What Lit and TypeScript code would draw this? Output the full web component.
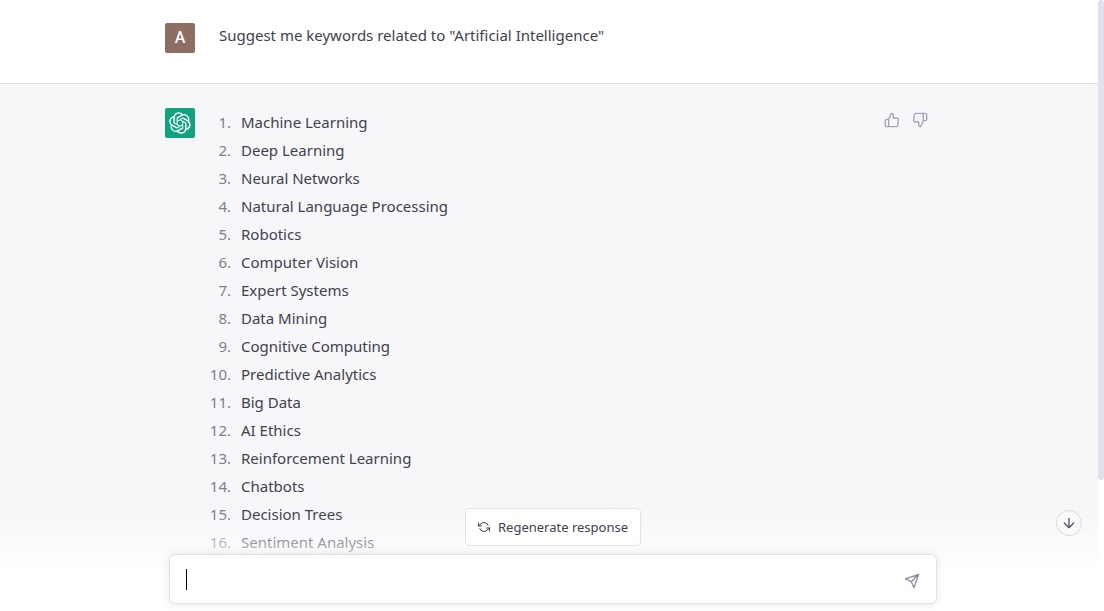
import { LitElement, html, css, svg } from "lit";
import { customElement, property } from "lit/decorators.js";

const KEYWORDS = [
  "Machine Learning",
  "Deep Learning",
  "Neural Networks",
  "Natural Language Processing",
  "Robotics",
  "Computer Vision",
  "Expert Systems",
  "Data Mining",
  "Cognitive Computing",
  "Predictive Analytics",
  "Big Data",
  "AI Ethics",
  "Reinforcement Learning",
  "Chatbots",
  "Decision Trees",
  "Sentiment Analysis",
];

const GLYPHS: Record<string, unknown> = {
  up: svg`<path d="M14 9V5a3 3 0 0 0-3-3l-4 9v11h11.28a2 2 0 0 0 2-1.7l1.38-9a2 2 0 0 0-2-2.3zM7 22H4a2 2 0 0 1-2-2v-7a2 2 0 0 1 2-2h3"/>`,
  down: svg`<path d="M10 15v4a3 3 0 0 0 3 3l4-9V2H5.72a2 2 0 0 0-2 1.7l-1.38 9a2 2 0 0 0 2 2.3zm7-13h2.67A2.31 2.31 0 0 1 22 4v7a2.31 2.31 0 0 1-2.33 2H17"/>`,
  refresh: svg`<path d="M1 4v6h6M23 20v-6h-6"/><path d="M20.49 9A9 9 0 0 0 5.64 5.64L1 10m22 4l-4.64 4.36A9 9 0 0 1 3.51 15"/>`,
  send: svg`<path d="M22 2L11 13M22 2l-7 20-4-9-9-4z"/>`,
  arrow: svg`<path d="M12 5v14M19 12l-7 7-7-7"/>`,
};

@customElement("line-icon")
export class LineIcon extends LitElement {
  @property() name = "up";

  static styles = css`
    :host { display: inline-flex; width: 16px; height: 16px; flex: none; }
    svg {
      width: 100%;
      height: 100%;
      fill: none;
      stroke: currentColor;
      stroke-width: 2;
      stroke-linecap: round;
      stroke-linejoin: round;
    }
  `;

  render() {
    return html`<svg viewBox="0 0 24 24" aria-hidden="true">${GLYPHS[this.name]}</svg>`;
  }
}

@customElement("app-root")
export class AppRoot extends LitElement {
  static styles = css`
    :host {
      display: block;
      position: relative;
      height: 100vh;
      overflow: hidden;
      background: #fff;
      color: #40414f;
      font: 15px/28px "Noto Sans", "Open Sans", sans-serif;
    }
    * { box-sizing: border-box; }
    button { font: inherit; color: inherit; margin: 0; cursor: pointer; }

    .viewport { display: flex; height: 100%; }
    .thread { flex: 1; min-width: 0; display: flex; flex-direction: column; }
    .track { width: 6px; }
    .thumb { height: 480px; background: #e1e1ea; border-radius: 6px; }

    .turn { border-bottom: 1px solid #e0e0e3; }
    .turn.reply { flex: 1; background: #f7f7fa; border-bottom: 0; }
    .inner {
      display: flex;
      gap: 24px;
      max-width: 768px;
      margin: 0 auto;
      padding: 21px 0 22px;
    }
    .reply .inner { padding: 24px 0; }
    .avatar {
      display: flex;
      align-items: center;
      justify-content: center;
      flex: none;
      width: 30px;
      height: 30px;
      margin-top: 2px;
      border-radius: 2px;
      background: #8d6e63;
      color: #fff;
      font: 500 16px/30px Roboto, sans-serif;
    }
    .reply .avatar { background: #10a37f; margin-top: 0; }
    .logo { width: 22px; height: 22px; fill: #fff; }
    .body { flex: 1; min-width: 0; }
    .prompt { margin: 0; min-height: 40px; }

    .list { list-style: none; margin: 0 0 0 -14px; padding: 0; }
    .item { display: flex; gap: 10px; }
    .num { width: 26px; text-align: right; color: #7b818c; }

    .votes { display: flex; gap: 4px; height: 24px; padding-right: 1px; color: #a3a3b5; }
    .vote { display: flex; padding: 4px; border: 0; background: none; }

    .composer {
      position: absolute;
      inset: auto 0 0 0;
      display: flex;
      flex-direction: column;
      align-items: center;
      gap: 8px;
      padding: 8px 0 7px 2px;
      background: linear-gradient(180deg, rgba(255, 255, 255, 0) 14%, #fff 66%);
    }
    .regen {
      display: flex;
      align-items: center;
      gap: 8px;
      height: 38px;
      padding: 0 12px;
      border: 1px solid #e2e2e7;
      border-radius: 4px;
      background: #fff;
      color: #40414f;
      font-size: 13px;
    }
    .regen line-icon { width: 12px; height: 12px; }
    .box {
      position: relative;
      display: flex;
      align-items: center;
      width: 100%;
      max-width: 768px;
      height: 50px;
      padding: 0 16px;
      border: 1px solid #e2e2e5;
      border-radius: 6px;
      background: #fff;
      box-shadow: 0 0 10px rgba(0, 0, 0, 0.1);
    }
    .field {
      flex: 1;
      height: 28px;
      padding: 0;
      border: 0;
      outline: 0;
      resize: none;
      background: none;
      font: inherit;
      color: inherit;
      caret-color: transparent;
    }
    .caret { position: absolute; left: 16px; top: 14px; width: 1px; height: 21px; background: #000; }
    .send { display: flex; padding: 3px 0 0; border: 0; background: none; color: #8e8ea0; }
    .jump {
      position: absolute;
      right: 22px;
      bottom: 75px;
      display: flex;
      align-items: center;
      justify-content: center;
      width: 26px;
      height: 26px;
      padding: 0;
      border: 1px solid #d9d9e0;
      border-radius: 50%;
      background: #f9f9fa;
      color: #565869;
    }
  `;

  render() {
    return html`
      <div class="viewport">
        <main class="thread">
          <section class="turn">
            <div class="inner">
              <div class="avatar">A</div>
              <div class="body">
                <p class="prompt">Suggest me keywords related to "Artificial Intelligence"</p>
              </div>
            </div>
          </section>
          <section class="turn reply">
            <div class="inner">
              <div class="avatar">
                <svg class="logo" viewBox="0 0 41 41" role="img" aria-label="ChatGPT">
                  <path d="M37.532 16.87a9.963 9.963 0 0 0-.856-8.184 10.078 10.078 0 0 0-10.855-4.835A9.964 9.964 0 0 0 18.306.5a10.079 10.079 0 0 0-9.614 6.977 9.967 9.967 0 0 0-6.664 4.834 10.08 10.08 0 0 0 1.24 11.817 9.965 9.965 0 0 0 .856 8.185 10.079 10.079 0 0 0 10.855 4.835 9.965 9.965 0 0 0 7.516 3.35 10.078 10.078 0 0 0 9.617-6.981 9.967 9.967 0 0 0 6.663-4.834 10.079 10.079 0 0 0-1.243-11.813ZM22.498 37.886a7.474 7.474 0 0 1-4.799-1.735c.061-.033.168-.091.237-.134l7.964-4.6a1.294 1.294 0 0 0 .655-1.134V19.054l3.366 1.944a.12.12 0 0 1 .066.092v9.299a7.505 7.505 0 0 1-7.49 7.496ZM6.392 31.006a7.471 7.471 0 0 1-.894-5.023c.06.036.162.099.237.141l7.964 4.6a1.297 1.297 0 0 0 1.308 0l9.724-5.614v3.888a.12.12 0 0 1-.048.103l-8.051 4.649a7.504 7.504 0 0 1-10.24-2.744ZM4.297 13.62A7.469 7.469 0 0 1 8.2 10.333c0 .068-.004.19-.004.274v9.201a1.294 1.294 0 0 0 .654 1.132l9.723 5.614-3.366 1.944a.12.12 0 0 1-.114.01L7.04 23.856a7.504 7.504 0 0 1-2.743-10.237Zm27.658 6.437-9.724-5.615 3.367-1.943a.121.121 0 0 1 .113-.01l8.052 4.648a7.498 7.498 0 0 1-1.158 13.528v-9.476a1.293 1.293 0 0 0-.65-1.132Zm3.35-5.043c-.059-.037-.162-.099-.236-.141l-7.965-4.6a1.298 1.298 0 0 0-1.308 0l-9.723 5.614v-3.888a.12.12 0 0 1 .048-.103l8.05-4.645a7.497 7.497 0 0 1 11.135 7.763Zm-21.063 6.929-3.367-1.944a.12.12 0 0 1-.065-.092v-9.299a7.497 7.497 0 0 1 12.293-5.756 6.94 6.94 0 0 0-.236.134l-7.965 4.6a1.294 1.294 0 0 0-.654 1.132l-.006 11.225Zm1.829-3.943 4.33-2.501 4.332 2.5v5l-4.331 2.5-4.331-2.5V18Z"/>
                </svg>
              </div>
              <div class="body">
                <ol class="list">
                  ${KEYWORDS.map(
                    (word, i) => html`<li class="item"><span class="num">${i + 1}.</span><span>${word}</span></li>`
                  )}
                </ol>
              </div>
              <div class="votes">
                <button class="vote" aria-label="Good response"><line-icon name="up"></line-icon></button>
                <button class="vote" aria-label="Bad response"><line-icon name="down"></line-icon></button>
              </div>
            </div>
          </section>
        </main>
        <div class="track"><div class="thumb"></div></div>
      </div>
      <form class="composer" @submit=${(e: Event) => e.preventDefault()}>
        <button class="regen" type="button"><line-icon name="refresh"></line-icon>Regenerate response</button>
        <div class="box">
          <textarea class="field" rows="1" aria-label="Message"></textarea>
          <span class="caret"></span>
          <button class="send" aria-label="Send message"><line-icon name="send"></line-icon></button>
        </div>
      </form>
      <button class="jump" aria-label="Scroll to bottom"><line-icon name="arrow"></line-icon></button>
    `;
  }
}
